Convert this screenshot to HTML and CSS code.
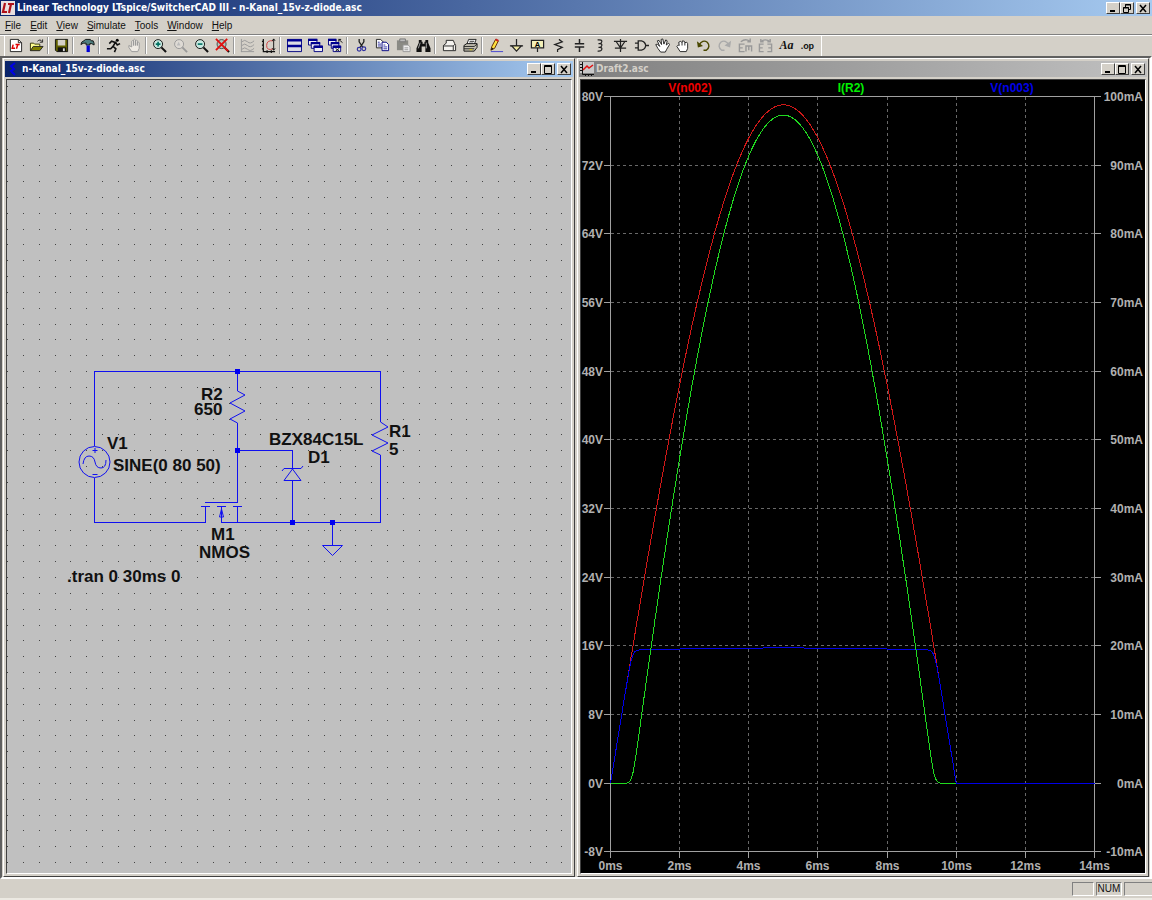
FILE: index.html
```html
<!DOCTYPE html>
<html lang="en">
<head>
    <meta charset="UTF-8">
    <meta name="viewport" content="width=device-width, initial-scale=1.0">
    <title>Linear Technology LTspice/SwitcherCAD III</title>
    <link rel="stylesheet" href="styles.css">
</head>
<body>

    <!-- Main title bar -->
    <header class="titlebar main-title">
        <svg class="app-icon" viewBox="0 0 14 14"><rect width="14" height="14" fill="#e8e0e0"/><path d="M4 2L2 11H6M7 3H13M10 3L8 12" fill="none" stroke="#b01018" stroke-width="2.200"/></svg>
        <h1>Linear Technology LTspice/SwitcherCAD III - n-Kanal_15v-z-diode.asc</h1>
        <div class="controls">
            <button title="Minimize"><svg viewBox="0 0 10 9"><path d="M2 7H7" stroke-width="2"/></svg></button>
            <button title="Restore"><svg viewBox="0 0 10 9"><path d="M3.500 3V.5H8.500V5.500H6M3 1H9M1.500 3.500H6.500V8.500H1.500ZM1 4H7"/></svg></button>
            <button class="close" title="Close"><svg viewBox="0 0 10 9"><path d="M2 1L8 8M8 1L2 8" stroke-width="1.500"/></svg></button>
        </div>
    </header>

    <!-- Menu -->
    <nav class="menu">
        <button><u>F</u>ile</button>
        <button><u>E</u>dit</button>
        <button><u>V</u>iew</button>
        <button><u>S</u>imulate</button>
        <button><u>T</u>ools</button>
        <button><u>W</u>indow</button>
        <button><u>H</u>elp</button>
    </nav>

    <!-- Toolbar -->
    <div class="toolbar">
        <div class="tools">
            <button title="New Schematic"><svg viewBox="0 0 16 16"><path d="M2.500 1.500H11L14.500 5V14.500H2.500Z" fill="#fff" stroke="#222"/><path d="M11 1.500V5H14.500" fill="none" stroke="#222"/><path d="M5.500 7L4.500 11H7.500M8 7H12.500M10.500 7L9 11.500" fill="none" stroke="#e00000" stroke-width="1.600"/></svg></button>
            <button title="Open"><svg viewBox="0 0 16 16"><path d="M1.500 13.500V5.500H5L6 6.500H11.500V9" fill="#ffff90" stroke="#333300"/><path d="M1.500 13.500L4.500 9H15L11.500 13.500Z" fill="#808000" stroke="#222"/><path d="M9 3.500Q12 .5 14 4M14.500 1.500V4.500H11.500" fill="none" stroke="#222"/></svg></button>
            <span class="sep"></span>
            <button title="Save"><svg viewBox="0 0 16 16"><path d="M1.500 1.500H14.500V14.500H3L1.500 13Z" fill="#606000" stroke="#111"/><path d="M4 2H12V8H4Z" fill="#d4d0c8"/><path d="M4 10H13V14.500H4Z" fill="#111"/><path d="M9.500 11H11.500V14H9.500Z" fill="#ddd"/></svg></button>
            <span class="sep"></span>
            <button title="Control Panel"><svg viewBox="0 0 16 16"><path d="M1 7Q1 4 4 3L6 1.500H11L12 3H14L15 5.500V7.500L12.500 6H10.500V7.500H6.500V5.500Q3 5 1 7Z" fill="#508080" stroke="#111"/><path d="M7 8H10.500V15H7Z" fill="#0000d8"/></svg></button>
            <span class="sep"></span>
            <button title="Run"><svg viewBox="0 0 16 16"><circle cx="12" cy="2.500" r="1.600"/><path d="M10.500 4L7.500 9L10.500 11.500L9 15M7.500 9L5 11.500H1M3.500 6L6 3.500L10.500 5L12 7.500L15 6" fill="none" stroke="#111" stroke-width="1.700"/></svg></button>
            <button title="Halt"><svg viewBox="0 0 16 16"><path d="M5 14.500L2 10V8L5 9.500V3.500Q6 2 7 3.500V8V2Q8.200.5 9 2V8V3Q10.500 1.500 11 3V8V5Q12.500 4 13 5V11L11.500 14.500Z" fill="#eeeae4" stroke="#999"/></svg></button>
            <span class="sep"></span>
            <button title="Zoom In"><svg viewBox="0 0 16 16"><circle cx="6.500" cy="6.500" r="4.800" fill="#c8e8e0" stroke="#111"/><path d="M10 10L15 15" stroke="#111" stroke-width="2.200"/><path d="M4 6.500H9M6.500 4V9" stroke="#007060" stroke-width="1.700"/></svg></button>
            <button title="Pan"><svg viewBox="0 0 16 16"><circle cx="6.500" cy="6.500" r="4.800" fill="#dedad4" stroke="#999"/><path d="M10 10L15 15" stroke="#999" stroke-width="2"/><path d="M4 8L6 4L8 8Z" fill="#bbb"/></svg></button>
            <button title="Zoom Out"><svg viewBox="0 0 16 16"><circle cx="6.500" cy="6.500" r="4.800" fill="#c8e8e0" stroke="#111"/><path d="M10 10L15 15" stroke="#111" stroke-width="2.200"/><path d="M4 6.500H9" stroke="#007060" stroke-width="1.700"/></svg></button>
            <button title="Zoom Full Extents"><svg viewBox="0 0 16 16"><circle cx="7" cy="6.500" r="4.800" fill="#b0c8c0" stroke="#444"/><path d="M10 10L15 15" stroke="#111" stroke-width="2.200"/><path d="M1 1L14 14M13 1L1 13" stroke="#e01010" stroke-width="2"/></svg></button>
            <span class="sep"></span>
            <button title="Autorange"><svg viewBox="0 0 16 16"><path d="M1.500 1V15M1 14.500H15M2 4Q5 1 8 4T15 3M2 8Q5 5 8 8T15 7M2 12Q5 9 8 12T15 11" fill="none" stroke="#999"/></svg></button>
            <button title="Plot Settings"><svg viewBox="0 0 16 16"><path d="M2.500 1V14.500H15M1 3.500H3M1 7.500H3M1 11.500H3M6.500 13V16M11 13V16" fill="none" stroke="#111" stroke-width="1.300"/><path d="M13 3Q6 2 6 8T13 11.500" fill="none" stroke="#d04040"/><path d="M13.500 1V13M12 3L13.500 1L15 3M12 11L13.500 13L15 11" fill="none" stroke="#111"/></svg></button>
            <span class="sep"></span>
            <button title="Tile"><svg viewBox="0 0 16 16"><path d="M.5 1.500H15.500V14.500H.5Z" fill="#dcdce4" stroke="#000080"/><path d="M0 2.500H16M0 8.500H16" stroke="#000090" stroke-width="2.500"/></svg></button>
            <button title="Cascade"><svg viewBox="0 0 16 16"><g fill="#eeeef4" stroke="#000080"><path d="M.5 1.500H9.500V7.500H.5Z"/><path d="M3.500 5H12.500V11H3.500Z"/><path d="M6.500 8.500H15.500V14.500H6.500Z"/></g><path d="M0 2H10M3 5.500H13M6 9.500H16" stroke="#000090" stroke-width="2.500"/></svg></button>
            <button title="Close All"><svg viewBox="0 0 16 16"><g fill="#eeeef4" stroke="#000080"><path d="M.5 1.500H8.500V7.500H.5Z"/><path d="M3.500 5H11.500V11H3.500Z"/><path d="M5.500 8.500H13.500V14.500H5.500Z"/></g><path d="M0 2H9M3 5.500H12M5 9.500H14" stroke="#000090" stroke-width="2.500"/><path d="M8 11L12 14M12 11L8 14M11.500 4V1.500H14M11.500 1.500L15.500 5" fill="none" stroke="#111"/></svg></button>
            <span class="sep"></span>
            <button title="Cut"><svg viewBox="0 0 16 16"><path d="M5.500 1V4L9.500 10M10.500 1V4L6.500 10" fill="none" stroke="#222" stroke-width="1.400"/><circle cx="5.500" cy="12" r="2" fill="none" stroke="#3030a0" stroke-width="1.300"/><circle cx="10.500" cy="11.500" r="2" fill="none" stroke="#3030a0" stroke-width="1.300"/></svg></button>
            <button title="Copy"><svg viewBox="0 0 16 16"><path d="M1.500 1.500H6L8.500 4V10.500H1.500Z" fill="#fff" stroke="#222"/><path d="M7.500 4.500H12L14.500 7V13.500H7.500Z" fill="#fff" stroke="#000080"/><path d="M3 4.500H5M3 6.500H6.500M3 8.500H6.500M9 7.500H11M9 9.500H13M9 11.500H13" stroke="#3030a0"/></svg></button>
            <button title="Paste"><svg viewBox="0 0 16 16"><path d="M1 2.500H13V13H1Z" fill="#8a8a84"/><path d="M4 1H10V4H4Z" fill="#bbb" stroke="#777"/><path d="M7.500 7.500H13L15 9.500V14.500H7.500Z" fill="#eee" stroke="#999"/><path d="M9 10.500H13M9 12.500H13" stroke="#999"/></svg></button>
            <button title="Find"><svg viewBox="0 0 16 16"><path d="M3 2H6V4H7V6H9V4H10V2H13V5L15.500 11V15H10V9H6V15H.5V11L3 5Z" fill="#111"/><path d="M4.500 5L2.500 11M11 5V11" stroke="#aaa"/></svg></button>
            <span class="sep"></span>
            <button title="Print Setup"><svg viewBox="0 0 16 16"><path d="M1.500 8L4.500 5.500V2.500H12L13.500 6L14.500 8V13.500H1.500Z" fill="#f4f2ee" stroke="#222"/><path d="M1.500 8.500H12L14 6.500M12 8.500V13" fill="none" stroke="#222"/></svg></button>
            <button title="Print"><svg viewBox="0 0 16 16"><path d="M4 7L6 1.500H14L12 7" fill="#fff" stroke="#222"/><path d="M1 8L4 6H15V10L12 14H1Z" fill="#c4c0b2" stroke="#111"/><path d="M1 9H12L15 6.500M1 11.500H12M7 3.500H12M6.500 5.500H11" fill="none" stroke="#222"/><path d="M7 12.500H10" stroke="#e0d000"/></svg></button>
            <span class="sep"></span>
            <button title="Wire"><svg viewBox="0 0 16 16"><path d="M2 13L3 9L7 1.500L10 3L6 11Z" fill="#ffe040" stroke="#5a2800"/><path d="M2 13L3 10L5 11.500Z" fill="#111"/><path d="M7 1.500L10 3" stroke="#d02020" stroke-width="2"/><path d="M2 14.500H15" stroke="#4040d0"/></svg></button>
            <button title="Ground"><svg viewBox="0 0 16 16"><path d="M8 1V8M1 8.500H15" stroke="#222" stroke-width="1.300"/><path d="M3 8.500H13L8 14Z" fill="#f0e8a0" stroke="#222" stroke-width="1.200"/></svg></button>
            <button title="Label Net"><svg viewBox="0 0 16 16"><path d="M1.500 2.500H14.500V10.500H1.500ZM8 10.500V15" fill="#f4f0b8" stroke="#222" stroke-width="1.300"/><text class="net-glyph" x="8" y="10">A</text></svg></button>
            <button title="Resistor"><svg viewBox="0 0 16 16"><path d="M9 1V2L12 4L4 7L12 10L7 12.500V15" fill="none" stroke="#222" stroke-width="1.300"/></svg></button>
            <button title="Capacitor"><svg viewBox="0 0 16 16"><path d="M8 1V6M8 9.500V15M3 6.200H13M3 9.500H13" stroke="#222" stroke-width="1.600"/></svg></button>
            <button title="Inductor"><svg viewBox="0 0 16 16"><path d="M6 2Q11 1.500 10.500 4T7 6Q11 5.500 10.500 8T7 10Q11 9.500 10.500 12T6 14" fill="none" stroke="#222" stroke-width="1.300"/></svg></button>
            <button title="Diode"><svg viewBox="0 0 16 16"><path d="M8 1V15M1 3.500H15M3.500 4L8 10.500L12.500 4M2 10.800H14" fill="none" stroke="#222" stroke-width="1.300"/></svg></button>
            <button title="Component"><svg viewBox="0 0 16 16"><path d="M4.500 3H8Q12 4 12.500 8Q12 12 8 13H4.500ZM1 5.500H4.500M1 10.500H4.500M12.500 8H16" fill="none" stroke="#222" stroke-width="1.400"/></svg></button>
            <button title="Move"><svg viewBox="0 0 16 16"><path d="M6 15L3 11L.8 7L2.500 6.500L5 9L2.500 3L4.200 2.500L7 7L6.500 1.500L8.300 1L9.500 6.500L11.500 2L13 3L12 7.500L14.500 5.500L15.500 7L12.500 12L11 15Z" fill="#fff" stroke="#222"/></svg></button>
            <button title="Drag"><svg viewBox="0 0 16 16"><path d="M5.500 14.500L2 9L3.500 7.500L4.500 8L4 4.500L6 3.500L7.500 5L8 3L10 3.500L10.500 5L12.500 4.500L13.500 6V11L12 14.500Z" fill="#fff" stroke="#222"/><path d="M7.500 5V8M10.500 5V8" stroke="#222"/></svg></button>
            <button title="Undo"><svg viewBox="0 0 16 16"><path d="M3 8Q7 1 12 4.500Q16 9 11 13H8" fill="none" stroke="#4a4800" stroke-width="1.500"/><path d="M1 3.500L2 10L7.500 8.500Z" fill="#4a4800"/></svg></button>
            <button title="Redo"><svg viewBox="0 0 16 16"><path d="M13 8Q9 1 4 4.500Q0 9 5 13H8" fill="none" stroke="#aaa" stroke-width="1.500"/><path d="M15 3L14 10L8 8Z" fill="#aaa"/></svg></button>
            <button title="Rotate"><svg viewBox="0 0 16 16"><path d="M7 6.500H1.500V14.500H7M1.500 10.500H5M8.500 14.500V8.500H14.500V14.500M11.500 8.500V13M3 4Q8 0 12.500 3.500M13 .5V4H10" fill="none" stroke="#999" stroke-width="1.500"/></svg></button>
            <button title="Mirror"><svg viewBox="0 0 16 16"><path d="M6 6.500H1.500V14.500H6M1.500 10.500H5M10 6.500H14.500V14.500H10M14.500 10.500H11M3 4Q8 0 13 4M3 1V4H6M13 1V4H10" fill="none" stroke="#999" stroke-width="1.500"/></svg></button>
            <button class="text-tool" title="Text">Aa</button>
            <button class="op-tool" title="SPICE Directive">.op</button>
        </div>
    </div>

    <!-- Child windows -->
    <main class="mdi">
        <section class="window">
            <div class="titlebar">
                <svg class="app-icon" viewBox="0 0 14 14"><path d="M9 1L5 4L8 7L5 9L9 13" fill="none" stroke="#0000e8" stroke-width="2"/></svg>
                <h2>n-Kanal_15v-z-diode.asc</h2>
                <div class="controls">
                    <button title="Minimize"><svg viewBox="0 0 10 9"><path d="M2 7H7" stroke-width="2"/></svg></button>
                    <button title="Maximize"><svg viewBox="0 0 10 9"><path d="M1.500 .5H8.500V8.500H1.500ZM1 1.500H9"/></svg></button>
                    <button class="close" title="Close"><svg viewBox="0 0 10 9"><path d="M2 1L8 8M8 1L2 8" stroke-width="1.500"/></svg></button>
                </div>
            </div>
            <div class="client schematic">
                <svg class="sheet">
                    <g transform="translate(-7 -80)">
                        <path id="dots" class="dots"/>
                        <!-- wires -->
                        <path class="wire" d="M94.500 446V371.500H380.500V422M380.500 455V522.500H221.500V507M94.500 478V522.500H205.500V507M237.500 371V391M237.500 423V502.500H205M237.500 450.500H292.500V468M292.500 480V522M237.500 507V522M332.500 522V545M201 506.500H210M217 506.500H226M233 506.500H242"/>
                        <!-- V1, R2, R1, D1, ground, M1 arrow -->
                        <g class="part">
                            <circle cx="94.500" cy="462" r="15.500"/>
                            <path d="M83 464Q84 456 89 456T95 462T101 468T106 460M92.500 450.500H97.500M95 448V453M92.500 474.500H97.500"/>
                            <path d="M237.500 391L245 395L230 403L245 411L230 419L237.500 423"/>
                            <path d="M380.500 422L388 427L372 435L388 443L372 451L380.500 455"/>
                            <path d="M282 471L284 468.500H301L303 466M292.500 469L301 480.500H284Z"/>
                            <path d="M322.500 545.500H342.500L332.500 555.500Z"/>
                            <path d="M221.500 509L223.500 517H219.500Z"/>
                        </g>
                        <path class="node" d="M235 369h5v5h-5zM235 448h5v5h-5zM290 520h5v5h-5zM330 520h5v5h-5z"/>
                        <g class="labels">
                            <text x="107" y="449">V1</text>
                            <text x="113" y="471">SINE(0 80 50)</text>
                            <text x="201" y="400">R2</text>
                            <text x="194" y="415">650</text>
                            <text x="269" y="445">BZX84C15L</text>
                            <text x="308" y="463">D1</text>
                            <text x="389" y="437">R1</text>
                            <text x="389" y="455">5</text>
                            <text x="211" y="540">M1</text>
                            <text x="199" y="558">NMOS</text>
                            <text x="67" y="582">.tran 0 30ms 0</text>
                        </g>
                    </g>
                </svg>
            </div>
        </section>

        <section class="window inactive">
            <div class="titlebar">
                <svg class="app-icon" viewBox="0 0 14 14"><path d="M0 0H14V11H0Z" fill="#c8c8c8"/><path d="M2.500 0V12.500H14M0 2.500H2M0 5.500H2M0 8.500H2M5.500 12V14M8.500 12V14M11.500 12V14" fill="none" stroke="#111"/><path d="M3 8L7 4L9 6L13 3" fill="none" stroke="#e01010" stroke-width="1.500"/></svg>
                <h2>Draft2.asc</h2>
                <div class="controls">
                    <button title="Minimize"><svg viewBox="0 0 10 9"><path d="M2 7H7" stroke-width="2"/></svg></button>
                    <button title="Maximize"><svg viewBox="0 0 10 9"><path d="M1.500 .5H8.500V8.500H1.500ZM1 1.500H9"/></svg></button>
                    <button class="close" title="Close"><svg viewBox="0 0 10 9"><path d="M2 1L8 8M8 1L2 8" stroke-width="1.500"/></svg></button>
                </div>
            </div>
            <div class="client plot">
                <svg class="sheet">
                    <g transform="translate(-581 -80)">
                        <path id="grid" class="grid"/>
                        <path id="axes" class="axes"/>
                        <path id="trace-n002" class="trace red"/>
                        <path id="trace-n003" class="trace blue"/>
                        <path id="trace-r2" class="trace green"/>
                        <g id="axis-labels" class="axis-labels"></g>
                        <g class="trace-names">
                            <text class="n002" x="690" y="92">V(n002)</text>
                            <text class="r2" x="851" y="92">I(R2)</text>
                            <text class="n003" x="1012" y="92">V(n003)</text>
                        </g>
                    </g>
                </svg>
            </div>
        </section>
    </main>

    <!-- Status bar -->
    <footer class="status">
        <span class="panel"></span>
        <span class="panel num">NUM</span>
        <span class="panel last"></span>
    </footer>

    <script src="script.js"></script>
</body>
</html>
```
FILE: styles.css
```css
* {
    box-sizing: border-box;
}

body {
    margin: 0;
    height: 100vh;
    display: flex;
    flex-direction: column;
    overflow: hidden;
    background-color: #d4d0c8;
    color: #111;
    font-family: "DejaVu Sans Condensed", "DejaVu Sans", sans-serif;
    font-size: 10px;
}

button {
    margin: 0;
    padding: 0;
    border: none;
    background: none;
    color: inherit;
    font: inherit;
}

/* Title bars */
.titlebar {
    display: flex;
    align-items: center;
    height: 16px;
    padding: 0 2px 0 1px;
    background: linear-gradient(to right, #0a246a, #a6caf0);
    color: #fff;
}

.titlebar h1,
.titlebar h2 {
    flex: 1;
    margin: 0;
    font-family: "DejaVu Sans Condensed", "DejaVu Sans", sans-serif;
    font-size: 10px;
    font-weight: bold;
    line-height: 16px;
    white-space: nowrap;
}

.inactive .titlebar {
    background: linear-gradient(to right, #808080, #c0c0c0);
    color: #d4d0c8;
}

.app-icon {
    width: 14px;
    height: 14px;
    margin-right: 2px;
}

.controls {
    display: flex;
}

.controls button {
    display: flex;
    align-items: center;
    justify-content: center;
    width: 14px;
    height: 12px;
    background-color: #d4d0c8;
    border: 1px solid;
    border-color: #fff #404040 #404040 #fff;
}

.controls .close {
    margin-left: 2px;
}

.controls svg {
    width: 10px;
    height: 9px;
    fill: none;
    stroke: #000;
}

/* Menu */
.menu {
    display: flex;
    gap: 9px;
    height: 18px;
    padding-left: 5px;
}

.menu button {
    font-family: "Liberation Sans", Arial, sans-serif;
    font-size: 10px;
}

/* Toolbar */
.toolbar {
    display: flex;
    height: 22px;
    padding-left: 4px;
    border-top: 1px solid #808080;
    box-shadow: inset 0 1px #fff;
}

.tools {
    display: flex;
    align-items: center;
    width: 818px;
    padding: 0 3px 0 0;
    border-left: 1px solid #fff;
    border-right: 1px solid #fff;
}

.tools button {
    display: flex;
    flex: 1;
    align-items: center;
    justify-content: center;
    height: 18px;
    min-width: 0;
}

.tools svg {
    width: 15px;
    height: 15px;
}

.sep {
    width: 5px;
    height: 17px;
    border-left: 1px solid #999;
    border-right: 3px solid #d4d0c8;
    background-color: #fff;
}

.net-glyph {
    font: bold 8px "Liberation Sans", sans-serif;
    text-anchor: middle;
}

.tools .text-tool {
    font: italic bold 12px "Liberation Serif", serif;
}

.tools .op-tool {
    font: bold 9px "Liberation Sans", sans-serif;
}

/* Child windows */
.mdi {
    display: flex;
    flex: 1;
    gap: 2px;
    min-height: 0;
    padding: 0 1px;
    border: 2px solid;
    border-color: #606060 #fff #fff #606060;
}

.window {
    display: flex;
    flex: 1;
    flex-direction: column;
    min-width: 0;
    padding: 2px 1px 1px;
    border: 1px solid;
    border-color: #fff #404040 #404040 #fff;
}

.client {
    flex: 1;
    min-height: 0;
    margin: 2px 1px 1px;
    overflow: hidden;
    border: 1px solid;
    border-color: #404040 #fff #fff #404040;
}

.sheet {
    display: block;
    width: 100%;
    height: 100%;
}

/* Schematic */
.schematic {
    background-color: #c0c0c0;
}

.dots {
    fill: #444;
    shape-rendering: crispEdges;
}

.wire {
    fill: none;
    stroke: #1010f0;
    shape-rendering: crispEdges;
}

.part {
    fill: none;
    stroke: #1010f0;
}

.node {
    fill: #0000f0;
}

.labels {
    font: bold 17px "Liberation Sans", Arial, sans-serif;
    fill: #111;
}

/* Waveform plot */
.plot {
    background-color: #000;
}

.grid {
    stroke: #686868;
    stroke-dasharray: 3 3;
    shape-rendering: crispEdges;
}

.axes {
    fill: none;
    stroke: #a0a0a0;
    shape-rendering: crispEdges;
}

.trace {
    fill: none;
    shape-rendering: crispEdges;
}

.red {
    stroke: #d01818;
}

.green {
    stroke: #20d820;
}

.blue {
    stroke: #0000e8;
}

.axis-labels,
.trace-names {
    font: bold 12px "Liberation Sans", Arial, sans-serif;
    fill: #b0b0b0;
}

.trace-names {
    text-anchor: middle;
}

.axis-labels .end {
    text-anchor: end;
}

.axis-labels .middle {
    text-anchor: middle;
}

.n002 {
    fill: #f00000;
}

.r2 {
    fill: #00f000;
}

.n003 {
    fill: #0000e8;
}

/* Status bar */
.status {
    display: flex;
    justify-content: flex-end;
    gap: 2px;
    height: 21px;
    padding: 3px 0 2px;
    border-bottom: 2px solid #ece9e2;
}

.panel {
    width: 22px;
    border: 1px solid;
    border-color: #808080 #fff #fff #808080;
}

.num {
    width: 26px;
    font-family: "Liberation Sans", Arial, sans-serif;
    line-height: 12px;
    text-align: center;
}

.last {
    width: 28px;
    border-right: none;
}
```
FILE: script.js
```js
// Schematic grid dots
let dots = '';
for (let row = 0; row < 120; row++) {
    for (let col = 0; col < 160; col++) {
        const x = Math.round(7 + col * 15.84);
        const y = Math.round(86 + row * 15.84);
        dots += `M${x} ${y}h1v1h-1z`;
    }
}
document.getElementById('dots').setAttribute('d', dots);

// Plot scales
const left = 610.5, right = 1094.5, top0 = 96.7, bottom = 851.7;
const px = t => left + t * (right - left) / 14;
const py = v => top0 + (80 - v) * (bottom - top0) / 88;
const snap = n => Math.floor(n) + 0.5;

const labels = document.getElementById('axis-labels');
function addLabel(x, y, text, cls) {
    const el = document.createElementNS('http://www.w3.org/2000/svg', 'text');
    el.setAttribute('x', x);
    el.setAttribute('y', y);
    el.setAttribute('class', cls);
    el.textContent = text;
    labels.appendChild(el);
}

let grid = '';
let axes = `M${left} ${snap(top0)}H${right}V${snap(bottom)}H${left}Z`;
for (let i = 0; i <= 11; i++) {
    const v = 80 - i * 8;
    const y = snap(py(v));
    if (i > 0 && i < 11) grid += `M${left} ${y}H${right}`;
    axes += `M604 ${y}H611M1094 ${y}H1101`;
    addLabel(603, Math.round(y + 4), v + 'V', 'end');
    addLabel(1143, Math.round(y + 4), (100 - i * 10) + 'mA', 'end');
}
for (let t = 0; t <= 14; t += 2) {
    const x = snap(px(t));
    if (t > 0 && t < 14) grid += `M${x} ${top0}V${bottom}`;
    axes += `M${x} 851V858`;
    addLabel(x, 870, t + 'ms', 'middle');
}
document.getElementById('grid').setAttribute('d', grid);
document.getElementById('axes').setAttribute('d', axes);

// Half sine wave clamped by the zener diode
const supply = t => t < 10 ? 79.1 * Math.sin(Math.PI * t / 10) : 0;
const zener = t => {
    const knee = 15.5 + 0.3 * supply(t) / 79.1;
    const soft = 1.1 * Math.log(1 + Math.exp((knee - supply(t)) / 1.1));
    return t < 10 ? Math.max(0, knee - soft) : 0;
};
const current = t => (supply(t) - zener(t)) / 650 * 1000;

function draw(id, fn, end) {
    let d = '';
    for (let i = 0; i <= end * 20; i++) {
        const t = i / 20;
        d += (i ? 'L' : 'M') + px(t).toFixed(1) + ' ' + (py(fn(t)) + 0.4).toFixed(1);
    }
    document.getElementById(id).setAttribute('d', d);
}
draw('trace-n002', supply, 10);
draw('trace-n003', zener, 14);
draw('trace-r2', t => current(t) * 0.8, 10);
```
